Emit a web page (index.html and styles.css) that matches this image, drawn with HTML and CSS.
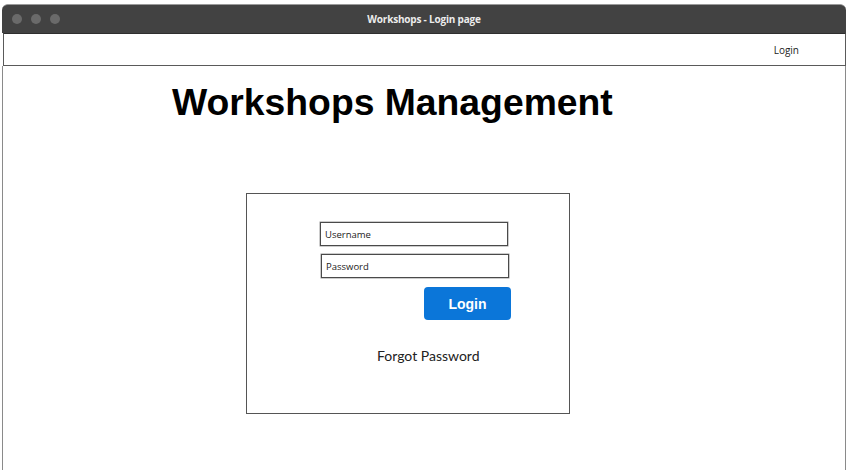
FILE: index.html
```html
<!DOCTYPE html>
<html>
<head>
<meta charset="utf-8">
<title>Workshops - Login page</title>
<link rel="stylesheet" href="styles.css">
</head>
<body>
<div class="window">
  <div class="titlebar">
    <div class="dots"><span class="dot"></span><span class="dot"></span><span class="dot"></span></div>
    <div class="title">Workshops - Login page</div>
  </div>
  <div class="navbar"><span class="nav-link">Login</span></div>
  <div class="content">
    <h1 class="heading">Workshops Management</h1>
    <div class="login-box">
      <div class="field">Username</div>
      <div class="field field-pass">Password</div>
      <div class="btn">Login</div>
      <div class="forgot">Forgot Password</div>
    </div>
  </div>
</div>
</body>
</html>
```
FILE: styles.css
```css
html, body {
  margin: 0;
  padding: 0;
  background: #ffffff;
  height: 100%;
  overflow: hidden;
}
.window {
  margin: 4px 0 0 2px;
  width: 844px;
  height: 466px;
  display: flex;
  flex-direction: column;
  box-sizing: border-box;
}
.titlebar {
  height: 29px;
  background: #424242;
  border-radius: 6px 6px 0 0;
  border-top: 1px solid #9a9a9a;
  box-sizing: border-box;
  display: flex;
  align-items: center;
  position: relative;
}
.dots {
  display: flex;
  gap: 9px;
  padding-left: 10px;
}
.dot {
  width: 10px;
  height: 10px;
  border-radius: 50%;
  background: #6a6a6a;
}
.title {
  position: absolute;
  left: 0;
  right: 0;
  text-align: center;
  font-family: "Open Sans", "Liberation Sans", sans-serif;
  font-weight: 700;
  font-size: 10px;
  color: #ececec;
  letter-spacing: -0.2px;
}
.navbar {
  height: 33px;
  box-sizing: border-box;
  border: 1px solid #5a5a5a;
  border-top: 1px solid #2e2e2e;
  margin-left: 1px;
  display: flex;
  align-items: center;
  justify-content: flex-end;
  padding-right: 46px;
}
.nav-link {
  font-family: "Open Sans", "Liberation Sans", sans-serif;
  font-size: 10px;
  color: #222;
}
.content {
  flex: 1;
  border-left: 1px solid #8a8a8a;
  border-right: 1px solid #8a8a8a;
  margin-left: 0;
  padding-top: 15px;
  padding-left: 169px;
}
.heading {
  margin: 0;
  font-family: "Liberation Sans", Arial, sans-serif;
  font-weight: 700;
  font-size: 37.3px;
  line-height: 42px;
  color: #000;
}
.login-box {
  margin-top: 70px;
  margin-left: 74px;
  width: 324px;
  height: 221px;
  box-sizing: border-box;
  border: 1px solid #555;
  display: flex;
  flex-direction: column;
  align-items: flex-start;
  padding-top: 28px;
  padding-left: 73px;
}
.field {
  width: 188px;
  height: 24px;
  box-sizing: border-box;
  border: 1px solid #4a4a4a;
  box-shadow: 0 0 0 0.5px #999;
  font-family: "Open Sans", "Liberation Sans", sans-serif;
  font-size: 9.5px;
  color: #222;
  display: flex;
  align-items: center;
  padding-left: 4px;
}
.field-pass {
  margin-top: 8px;
  margin-left: 1px;
}
.btn {
  margin-top: 9px;
  margin-left: 104px;
  width: 87px;
  height: 33px;
  background: #0b76d9;
  border-radius: 4px;
  color: #fff;
  font-family: "Liberation Sans", Arial, sans-serif;
  font-weight: 700;
  font-size: 14px;
  display: flex;
  align-items: center;
  justify-content: center;
}
.forgot {
  margin-top: 27px;
  margin-left: 57px;
  font-family: Lato, "Open Sans", sans-serif;
  font-size: 14px;
  color: #222;
}
```
